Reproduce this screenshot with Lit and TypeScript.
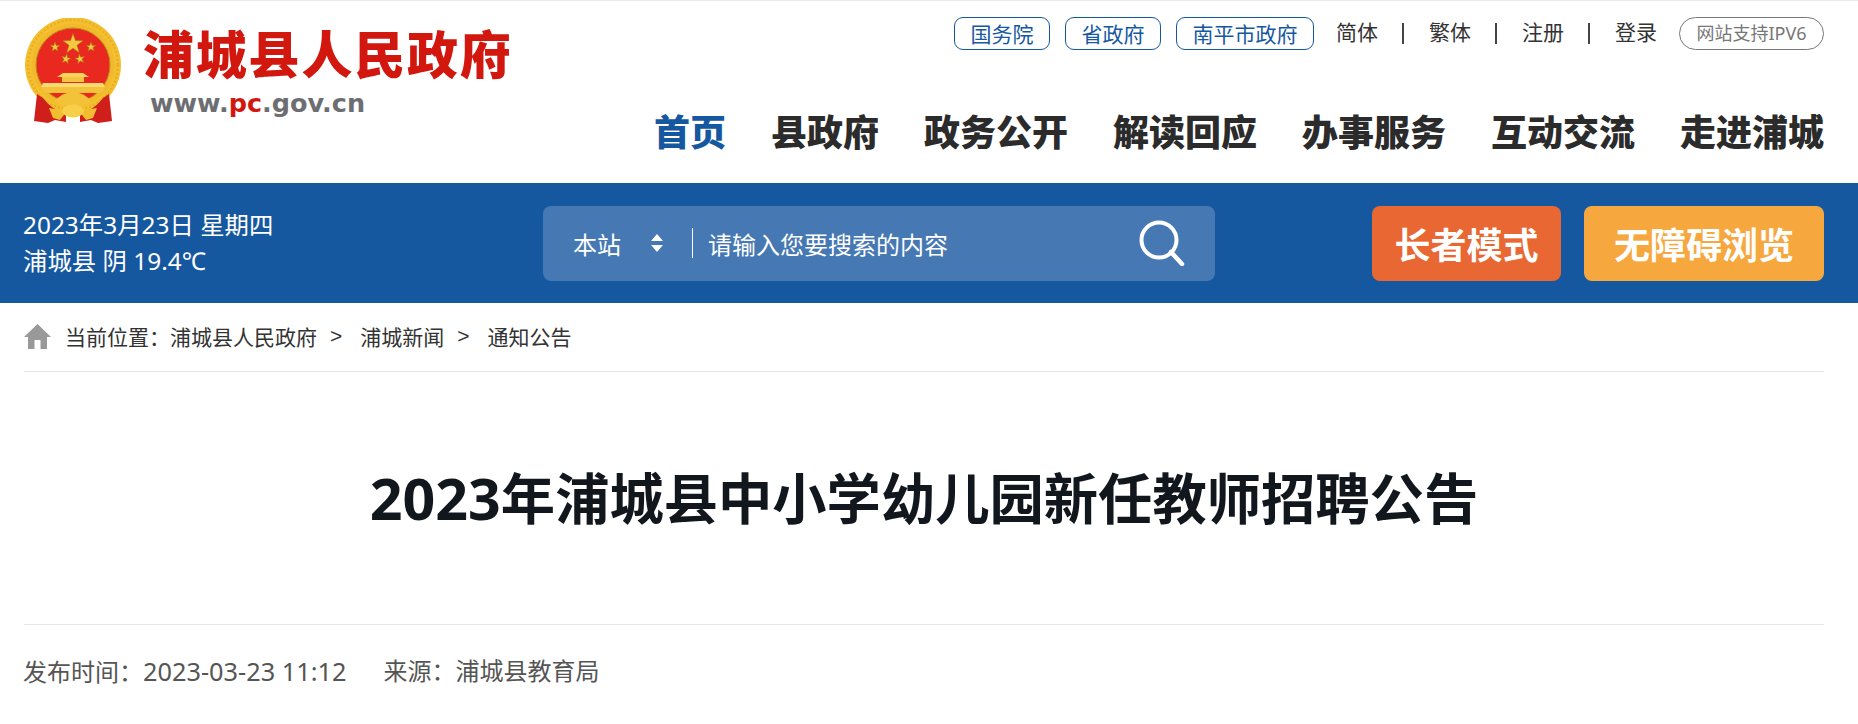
import { LitElement, html, css, svg } from "lit";
import { customElement } from "lit/decorators.js";

const star = (cx: number, cy: number, r: number, rot = 0) => {
  const pts: string[] = [];
  for (let i = 0; i < 10; i++) {
    const rad = i % 2 === 0 ? r : r * 0.4;
    const a = -Math.PI / 2 + (i * Math.PI) / 5 + rot;
    pts.push(`${(cx + rad * Math.cos(a)).toFixed(2)},${(cy + rad * Math.sin(a)).toFixed(2)}`);
  }
  return svg`<polygon points=${pts.join(" ")} fill="#f3c93f" stroke="#a9781a" stroke-width=".6"/>`;
};

const emblem = html`<svg class="emblem" viewBox="0 0 98 106" aria-hidden="true">
  <circle cx="49" cy="47" r="48" fill="#f4c02f"/>
  <circle cx="49" cy="47" r="45" fill="none" stroke="#eaae26" stroke-width="2.5" stroke-dasharray="2 2"/>
  <path d="M13 76 L19 80 Q28 92 42 96 L42 104 L31 102 L24 105 L10 103 Z" fill="#d01f1b"/>
  <path d="M85 76 L79 80 Q70 92 56 96 L56 104 L67 102 L74 105 L88 103 Z" fill="#d01f1b"/>
  <path d="M49 9.5 A37.5 37.5 0 0 1 49 84.5 A37.5 37.5 0 0 1 49 9.5 Z" fill="#e9291f"/>
  <circle cx="49" cy="47" r="39" fill="none" stroke="#f1b92b" stroke-width="4.5"/>
  <circle cx="49" cy="47" r="37" fill="none" stroke="#b98718" stroke-width="1"/>
  ${star(49, 26, 10.5)}${star(31, 29, 5)}${star(67, 29, 5)}${star(42, 41, 5, 0.2)}${star(56, 41, 5, -0.2)}
  <path d="M39 55 H59 L65 59 H33 Z" fill="#f8d35b"/>
  <rect x="38" y="59" width="22" height="5" fill="#f4c543"/>
  <path d="M19 65 H79 L81 69 H17 Z" fill="#f8db70"/>
  <path d="M17 69 H81 L78 75 H20 Z" fill="#f3c13a"/>
  <path d="M30 84 Q38 74 49 74 Q60 74 68 84 Q59 88 49 88 Q39 88 30 84 Z" fill="#f3c238"/>
  <path d="M25 90 L43 93 L36 102 L29 100 Z M73 90 L55 93 L62 102 L69 100 Z" fill="#f2bd31"/>
  <ellipse cx="49" cy="93" rx="11" ry="6.5" fill="#f7cf49"/>
</svg>`;

@customElement("app-root")
export class AppRoot extends LitElement {
  static styles = css`
    :host {
      display: block;
      height: 724px;
      overflow: hidden;
      background: #fff;
      font-family: "Noto Sans", "Noto Sans CJK SC", sans-serif;
      color: #333;
    }
    .top-rule { height: 1px; background: #e9e9e9; }
    .header {
      display: flex;
      justify-content: space-between;
      height: 182px;
      padding: 0 34px 0 24px;
    }
    .logo { display: flex; gap: 21px; padding-top: 17px; align-items: flex-start; }
    .emblem { width: 98px; height: 106px; flex: none; }
    .logo-text { display: flex; flex-direction: column; }
    .logo-name {
      font: 900 51px/60px "Noto Sans CJK SC", sans-serif;
      letter-spacing: 1.8px;
      color: #d2170f;
      margin-top: 4px;
      white-space: nowrap;
    }
    .logo-url {
      font: bold 25.5px/30px "DejaVu Sans", sans-serif;
      color: #6d6e71;
      margin: 6px 0 0 7px;
    }
    .logo-url span { color: #d2170f; }
    .right { display: flex; flex-direction: column; align-items: flex-end; }
    .links { display: flex; align-items: center; height: 33px; margin-top: 16px; font-size: 21px; line-height: 33px; }
    .pill {
      box-sizing: border-box;
      height: 33px;
      padding: 0 15.5px;
      border: 1px solid #16589f;
      border-radius: 9px;
      color: #16589f;
      line-height: 30px;
      margin-right: 15px;
      font-family: "Noto Sans CJK SC", sans-serif;
    }
    .pill.last { margin-right: 22px; }
    .plain { color: #333; font-family: "Noto Sans CJK SC", sans-serif; margin-top: -4px; }
    .sep { width: 2px; height: 21px; background: #444; margin: 0 24.5px; }
    .ipv6 {
      box-sizing: border-box;
      height: 33px;
      margin-left: 22px;
      padding: 0 16.5px;
      border: 1px solid #777;
      border-radius: 17px;
      font-size: 18px;
      line-height: 31px;
      color: #777;
      white-space: nowrap;
    }
    .nav { display: flex; gap: 45px; margin-top: 56px; font: 900 36px/48px "Noto Sans CJK SC", sans-serif; color: #2b2b2b; }
    .nav .on { color: #16589f; }
    .bar {
      display: flex;
      align-items: center;
      height: 120px;
      padding: 0 34px 0 24px;
      background: #16589f;
      color: #fff;
    }
    .date { width: 519px; margin-left: -1px; margin-right: 1px; font-size: 24.4px; line-height: 36px; white-space: nowrap; }
    .search {
      display: flex;
      align-items: center;
      box-sizing: border-box;
      width: 672px;
      height: 75px;
      padding: 0 30px;
      background: #4678b3;
      border-radius: 8px;
      font-size: 24px;
    }
    .scope { width: 48px; font-family: "Noto Sans CJK SC", sans-serif; }
    .updown { width: 14px; height: 20px; margin-left: 29px; }
    .divider { width: 1px; height: 30px; background: #fff; margin: 0 15px 0 28px; }
    .ph { flex: 1; font-family: "Noto Sans CJK SC", sans-serif; }
    .mag { width: 46px; height: 46px; }
    .btn {
      box-sizing: border-box;
      display: flex;
      align-items: center;
      justify-content: center;
      height: 75px;
      border-radius: 8px;
      font: bold 36px/1 "Noto Sans CJK SC", sans-serif;
    }
    .elder { width: 189px; margin-left: 157px; background: #e96732; }
    .access { width: 240px; margin-left: 23px; background: #f6a83f; }
    .crumb {
      display: flex;
      align-items: center;
      box-sizing: border-box;
      height: 69px;
      padding-bottom: 2px;
      margin: 0 34px 0 24px;
      border-bottom: 1px solid #e6e6e6;
      font-size: 21px;
      color: #333;
    }
    .home { width: 27px; height: 27px; margin-right: 14px; }
    .gt { margin: 0 18px 0 13px; font-family: "Liberation Sans", sans-serif; }
    .crumb span.t { font-family: "Noto Sans CJK SC", sans-serif; }
    .title {
      height: 253px;
      display: flex;
      align-items: center;
      justify-content: center;
      margin: 0 34px 0 24px;
      padding-top: 1px;
      box-sizing: border-box;
      border-bottom: 1px solid #e6e6e6;
      font: bold 54.3px/1.2 "Noto Sans", "Noto Sans CJK SC", sans-serif;
      color: #12161d;
      white-space: pre;
    }
    .meta { display: flex; gap: 37px; margin: 26px 34px 0 23px; font-size: 24px; line-height: 40px; color: #555; }
    .num { font-size: 1.055em; }
  `;

  render() {
    const nav = ["首页", "县政府", "政务公开", "解读回应", "办事服务", "互动交流", "走进浦城"];
    return html`
      <div class="top-rule"></div>
      <header class="header">
        <div class="logo">
          ${emblem}
          <div class="logo-text">
            <div class="logo-name">浦城县人民政府</div>
            <div class="logo-url">www.<span>pc</span>.gov.cn</div>
          </div>
        </div>
        <div class="right">
          <div class="links">
            <a class="pill">国务院</a><a class="pill">省政府</a><a class="pill last">南平市政府</a>
            <a class="plain">简体</a><i class="sep"></i>
            <a class="plain">繁体</a><i class="sep"></i>
            <a class="plain">注册</a><i class="sep"></i>
            <a class="plain">登录</a>
            <a class="ipv6">网站支持IPV6</a>
          </div>
          <nav class="nav">
            ${nav.map((n, i) => html`<a class=${i === 0 ? "on" : ""}>${n}</a>`)}
          </nav>
        </div>
      </header>
      <section class="bar">
        <div class="date">2023年3月23日 星期四<br />浦城县 阴 19.4℃</div>
        <div class="search">
          <span class="scope">本站</span>
          <svg class="updown" viewBox="0 0 14 20"><path d="M7 1 L13 8 H1 Z M7 19 L1 12 H13 Z" fill="#fff"/></svg>
          <i class="divider"></i>
          <span class="ph">请输入您要搜索的内容</span>
          <svg class="mag" viewBox="0 0 46 46"><circle cx="20" cy="20" r="17.5" fill="none" stroke="#fff" stroke-width="4"/><path d="M32 32 L43 44" stroke="#fff" stroke-width="4.5" stroke-linecap="round"/></svg>
        </div>
        <a class="btn elder">长者模式</a>
        <a class="btn access">无障碍浏览</a>
      </section>
      <div class="crumb">
        <svg class="home" viewBox="0 0 27 27"><path d="M13.5 1 L27 14 H23 V26 H16.5 V17 H10.5 V26 H4 V14 H0 Z" fill="#999"/></svg>
        <span class="t">当前位置：浦城县人民政府</span><span class="gt">&gt;</span>
        <span class="t">浦城新闻</span><span class="gt">&gt;</span>
        <span class="t">通知公告</span>
      </div>
      <h1 class="title"><span class="num">2023</span>年浦城县中小学幼儿园新任教师招聘公告</h1>
      <div class="meta"><span>发布时间：<span class="num">2023-03-23 11:12</span></span><span>来源：浦城县教育局</span></div>
    `;
  }
}
